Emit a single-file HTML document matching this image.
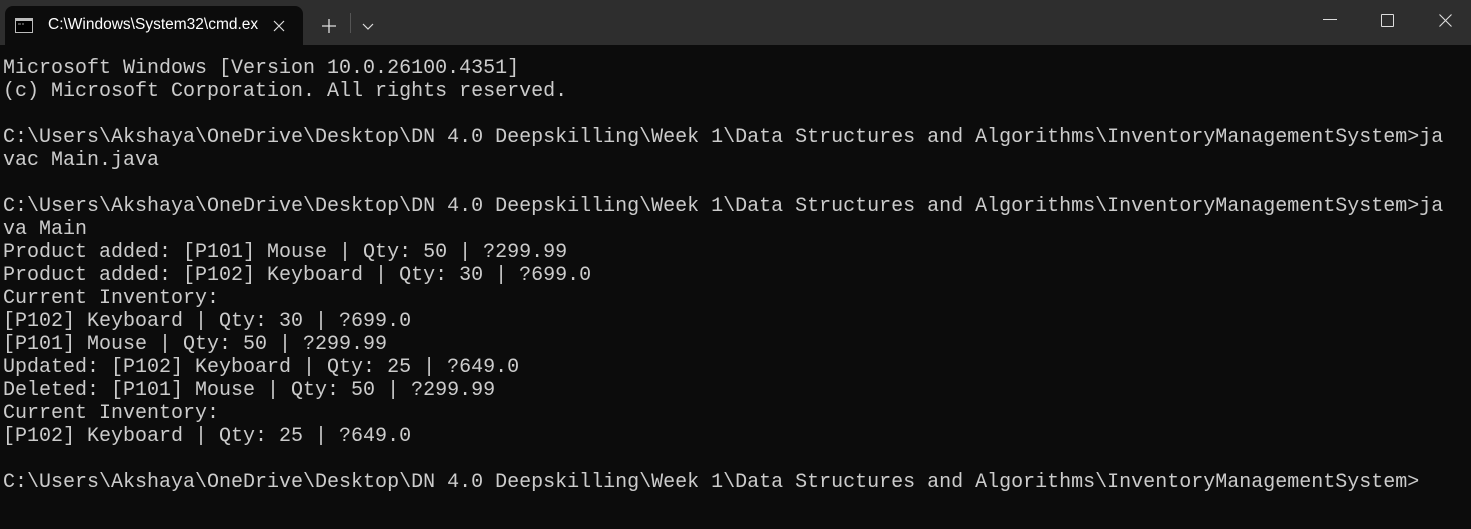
<!DOCTYPE html>
<html><head><style>
html,body{margin:0;padding:0;width:1471px;height:529px;overflow:hidden;background:#0c0c0c;}
.bar{position:absolute;left:0;top:0;width:1471px;height:45px;background:#2e2e2e;}
.tab{position:absolute;left:5px;top:6px;width:298px;height:39px;background:#0c0c0c;border-radius:8px 8px 0 0;}
.tab .t{position:absolute;left:43px;top:10px;font:15.5px "Liberation Sans",sans-serif;color:#fff;width:210px;overflow:hidden;white-space:nowrap;}
pre{position:absolute;left:3px;top:57px;margin:0;font:20px/23px "Liberation Mono",monospace;color:#cccccc;}
</style></head><body>
<div class="bar">
 <div class="tab">
  <svg style="position:absolute;left:10px;top:12px" width="19" height="16"><rect x="0.5" y="0.5" width="17" height="14" fill="#000" stroke="#bbb"/><rect x="1" y="1" width="16" height="2" fill="#bbb"/><path d="M3 6h3M7 6h2" stroke="#999"/></svg>
  <div class="t">C:\Windows\System32\cmd.exe</div>
  <svg style="position:absolute;left:268px;top:14px" width="12" height="12"><path d="M1 1L11 11M11 1L1 11" stroke="#ddd" stroke-width="1.2"/></svg>
 </div>
 <svg style="position:absolute;left:322px;top:19px" width="14" height="14"><path d="M7 0V14M0 7H14" stroke="#ddd" stroke-width="1.3"/></svg>
 <div style="position:absolute;left:350px;top:13px;width:1px;height:20px;background:#555"></div>
 <svg style="position:absolute;left:362px;top:23px" width="12" height="7"><path d="M1 1L6 6L11 1" stroke="#ddd" fill="none" stroke-width="1.2"/></svg>
 <div style="position:absolute;left:1323px;top:19px;width:14px;height:1px;background:#ddd"></div>
 <div style="position:absolute;left:1381px;top:14px;width:11px;height:11px;border:1px solid #ddd;border-radius:1px"></div>
 <svg style="position:absolute;left:1439px;top:14px" width="13" height="13"><path d="M0.5 0.5L12.5 12.5M12.5 0.5L0.5 12.5" stroke="#ddd" stroke-width="1.1"/></svg>
</div>
<pre>Microsoft Windows [Version 10.0.26100.4351]
(c) Microsoft Corporation. All rights reserved.

C:\Users\Akshaya\OneDrive\Desktop\DN 4.0 Deepskilling\Week 1\Data Structures and Algorithms\InventoryManagementSystem>ja
vac Main.java

C:\Users\Akshaya\OneDrive\Desktop\DN 4.0 Deepskilling\Week 1\Data Structures and Algorithms\InventoryManagementSystem>ja
va Main
Product added: [P101] Mouse | Qty: 50 | ?299.99
Product added: [P102] Keyboard | Qty: 30 | ?699.0
Current Inventory:
[P102] Keyboard | Qty: 30 | ?699.0
[P101] Mouse | Qty: 50 | ?299.99
Updated: [P102] Keyboard | Qty: 25 | ?649.0
Deleted: [P101] Mouse | Qty: 50 | ?299.99
Current Inventory:
[P102] Keyboard | Qty: 25 | ?649.0

C:\Users\Akshaya\OneDrive\Desktop\DN 4.0 Deepskilling\Week 1\Data Structures and Algorithms\InventoryManagementSystem></pre>
</body></html>
